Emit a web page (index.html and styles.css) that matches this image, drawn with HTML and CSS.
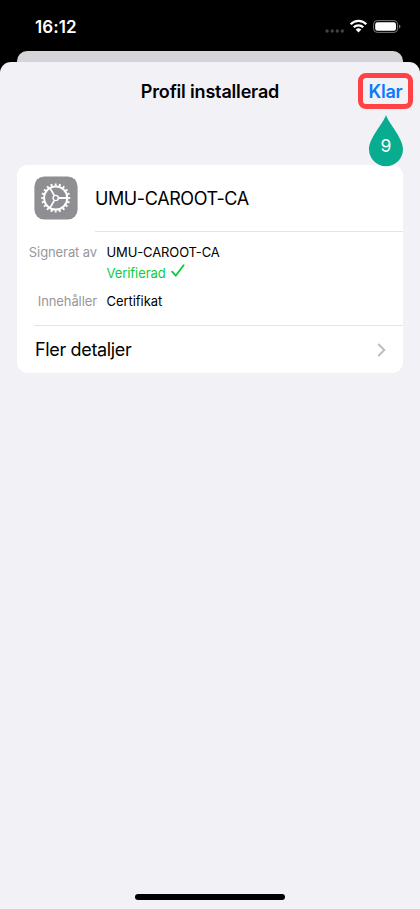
FILE: index.html
```html
<!DOCTYPE html>
<html lang="sv">
<head>
<meta charset="utf-8">
<title>Profil installerad</title>
<link rel="stylesheet" href="styles.css">
</head>
<body>
<div class="phone">
  <header class="status">
    <span class="time">16:12</span>
    <svg class="indicators" width="78" height="18" viewBox="0 0 78 18">
      <g fill="#424242"><circle cx="3.1" cy="13" r="1.7"/><circle cx="8.2" cy="13" r="1.7"/><circle cx="13.3" cy="13" r="1.7"/><circle cx="18.3" cy="13" r="1.7"/></g>
      <g fill="none" stroke="#fff" stroke-width="2.3">
        <path d="M26.7 6.3a10.6 10.6 0 0 1 15.6 0"/>
        <path d="M29.7 9.3a6.8 6.8 0 0 1 9.6 0"/>
      </g>
      <path fill="#fff" d="M34.5 14.4l-2.8-2.8a4 4 0 0 1 5.6 0z"/>
      <rect x="49.6" y="2.6" width="24" height="11.8" rx="3.6" fill="none" stroke="#777" stroke-width="1"/>
      <rect x="51.2" y="4.2" width="20.8" height="8.6" rx="2.2" fill="#fff"/>
      <path fill="#777" d="M75 6.6c2 .7 2 3.3 0 4z"/>
    </svg>
  </header>
  <div class="back-sheet"></div>
  <main class="sheet">
    <div class="nav">
      <h1 class="title">Profil installerad</h1>
      <div class="done"><span class="done-label">Klar</span>
        <svg class="marker" width="34" height="52" viewBox="0 0 34 52">
          <path fill="#08ad90" d="M17 0C19.500 8 34 23 34 34.200a17 17 0 0 1-34 0C0 23 14.500 8 17 0z"/>
          <text class="marker-text" x="17" y="37" text-anchor="middle">9</text>
        </svg>
      </div>
    </div>
    <section class="card">
      <div class="profile">
        <svg class="gear" width="44" height="44" viewBox="0 0 44 44">
          <rect x=".4" y=".4" width="43.200" height="43.200" rx="10" fill="#8e8e93"/>
          <g fill="none" stroke="#fff" transform="translate(21.700 22)">
            <circle r="11.600" stroke-width="2"/>
            <circle r="13.400" stroke-width="2.300" pathLength="40" stroke-dasharray=".9 1.100" stroke-dashoffset=".45"/>
            <circle r="2.600" stroke-width="1.400"/>
            <path stroke-width="1.800" d="M3 0h8.600M-1.500-2.600l-4.300-7.500M-1.500 2.600l-4.300 7.500"/>
          </g>
        </svg>
        <div class="name">UMU-CAROOT-CA</div>
      </div>
      <dl class="facts">
        <dt>Signerat av</dt>
        <dd><div class="signer">UMU-CAROOT-CA</div>
          <div class="verified"><span>Verifierad</span><svg width="14" height="14" viewBox="0 0 14 14"><path d="M1.200 7.700L4.700 11.700 12.600 1.300" fill="none" stroke="#0ccd42" stroke-width="1.900" stroke-linecap="round" stroke-linejoin="round"/></svg></div>
        </dd>
        <dt>Innehåller</dt>
        <dd>Certifikat</dd>
      </dl>
      <div class="more"><span>Fler detaljer</span>
        <svg width="9" height="14" viewBox="0 0 9 14"><path d="M1.300 1l6 6-6 6" fill="none" stroke="#bcbcbf" stroke-width="1.900"/></svg>
      </div>
    </section>
    <div class="home"></div>
  </main>
</div>
</body>
</html>
```
FILE: styles.css
```css
* { box-sizing: border-box; }
body { margin: 0; background: #000; font-family: Inter, "Liberation Sans", sans-serif; color: #000; }
svg { display: block; flex: none; }
.phone { width: 420px; height: 909px; display: flex; flex-direction: column; overflow: hidden; background: #000; }
.status { height: 51px; flex: none; display: flex; justify-content: space-between; align-items: flex-start; padding: 18px 18px 0 35px; color: #fff; }
.time { font-size: 17px; line-height: 18px; font-weight: 600; letter-spacing: 0.1px; }
.back-sheet { height: 11px; flex: none; margin: 0 17px; background: #d5d4d9; border-radius: 10px 10px 0 0; }
.sheet { flex: 1; display: flex; flex-direction: column; background: #f2f1f6; border-radius: 11px 11px 0 0; }
.nav { height: 103px; flex: none; display: grid; grid-template-columns: 1fr auto 1fr; padding: 11px 7px 0; align-items: start; }
.title { grid-column: 2; margin: 0; padding-top: 1px; font-size: 18px; line-height: 36px; font-weight: 600; letter-spacing: -0.17px; }
.done { position: relative; justify-self: end; width: 55px; height: 36px; border: 5px solid #ff4245; border-radius: 8px; text-align: center; }
.done-label { display: block; padding-top: 1px; color: #087aff; font-size: 18px; line-height: 26px; font-weight: 600; letter-spacing: -0.2px; }
.marker { position: absolute; left: 6px; top: 37px; z-index: 1; }
.marker-text { fill: #fff; font-size: 17.500px; font-weight: 400; }
.card { margin: 0 17px; height: 208px; display: flex; flex-direction: column; background: #fff; border-radius: 11px; overflow: hidden; }
.profile { height: 67px; display: flex; padding-left: 17px; gap: 17px; }
.gear { margin-top: 11px; }
.name { flex: 1; border-bottom: 1px solid #e4e4e6; line-height: 67px; font-size: 18px; letter-spacing: -0.4px; }
.facts { margin: 0 0 0 17px; padding-top: 11px; height: 94px; display: grid; grid-template-columns: 63px 1fr; column-gap: 9.500px; row-gap: 8px; align-content: start; font-size: 13px; line-height: 20px; border-bottom: 1px solid #e4e4e6; }
.facts dt { color: #97979b; justify-self: end; white-space: nowrap; letter-spacing: -0.1px; }
.facts dt:first-child { margin-top: -1px; }
.facts dd { margin: 0; letter-spacing: -0.05px; }
.signer { margin-top: -1px; height: 21px; letter-spacing: -0.12px; }
.verified { display: flex; align-items: center; gap: 5px; color: #0ccd42; letter-spacing: -0.07px; }
.verified svg { margin-top: -4px; }
.more { height: 47px; display: flex; align-items: center; justify-content: space-between; padding: 0 17px 0 18px; font-size: 18px; letter-spacing: -0.35px; }
.home { width: 150px; height: 6px; border-radius: 3px; background: #000; margin: auto auto 9px; }
```
